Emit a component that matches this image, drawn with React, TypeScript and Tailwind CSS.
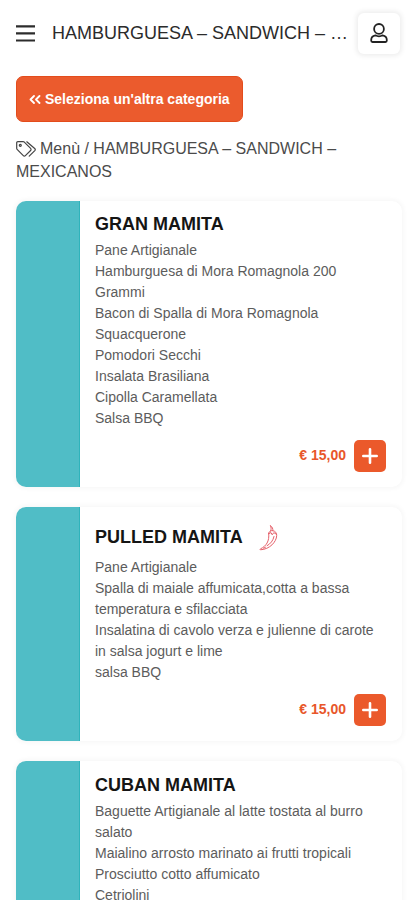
import React from 'react';

type Item = { name: string; lines: string[]; spicy?: boolean; className: string };

const items: Item[] = [
  {
    name: 'GRAN MAMITA',
    className: 'h-[286px] pt-[13px]',
    lines: [
      'Pane Artigianale',
      'Hamburguesa di Mora Romagnola 200',
      'Grammi',
      'Bacon di Spalla di Mora Romagnola',
      'Squacquerone',
      'Pomodori Secchi',
      'Insalata Brasiliana',
      'Cipolla Caramellata',
      'Salsa BBQ',
    ],
  },
  {
    name: 'PULLED MAMITA',
    className: 'h-[234px] pt-[13px]',
    spicy: true,
    lines: [
      'Pane Artigianale',
      'Spalla di maiale affumicata,cotta a bassa',
      'temperatura e sfilacciata',
      'Insalatina di cavolo verza e julienne di carote',
      'in salsa jogurt e lime',
      'salsa BBQ',
    ],
  },
  {
    name: 'CUBAN MAMITA',
    className: 'h-[160px] pt-[14px]',
    lines: [
      'Baguette Artigianale al latte tostata al burro',
      'salato',
      'Maialino arrosto marinato ai frutti tropicali',
      'Prosciutto cotto affumicato',
      'Cetriolini',
    ],
  },
];

function MenuIcon() {
  return (
    <svg className="h-[18px] w-[19px] shrink-0" viewBox="0 0 19 18" stroke="#2c2c2c" strokeWidth="2.2">
      <path d="M0 2.400h19M0 9.400h19M0 16.500h19" />
    </svg>
  );
}

function UserIcon() {
  return (
    <svg className="h-5 w-[18px]" viewBox="0 0 18 20" fill="none" stroke="#222" strokeWidth="1.800" strokeLinejoin="round">
      <circle cx="9" cy="5.900" r="4.900" />
      <path d="M5.400 12.300C2.800 12.800 1.200 14.600 1.200 16.900v.7c0 .9.500 1.400 1.300 1.400h13c.8 0 1.300-.5 1.300-1.400v-.7c0-2.300-1.600-4.100-4.200-4.600-1.100.7-2.300 1-3.600 1s-2.500-.3-3.600-1z" />
    </svg>
  );
}

function TagsIcon() {
  return (
    <svg className="mr-[4px] inline-block h-4 w-5 align-[-3px]" viewBox="0 0 20 16" fill="none" stroke="#444" strokeWidth="1.2" strokeLinejoin="round" strokeLinecap="round">
      <path d="M.7 1.800C.7 1.200 1.200.7 1.800.7h5.400c.4 0 .8.200 1.100.4l6.300 6.300c.6.600.6 1.500 0 2.100l-5.200 5.200c-.6.600-1.500.6-2.100 0L1.100 8.400C.8 8.100.7 7.700.7 7.300z" />
      <path d="M10.800.8l7.900 6.700c.7.600.7 1.400.1 2.100l-5.600 5.500" />
      <circle cx="4.300" cy="4.300" r="1" />
    </svg>
  );
}

function ChiliIcon() {
  return (
    <svg className="ml-[16px] h-[26px] w-5" viewBox="0 0 20 26" fill="none" stroke="#e4606a" strokeWidth="1" strokeLinecap="round" strokeLinejoin="round">
      <path d="M11.500.8c2 1.200 2.600 3 2.300 4.900M11.500.8c.9 1.700.8 3.200.2 5.100" />
      <path d="M9.700 8.300c.4-1.900 2.100-3 4.100-2.600 2.500.4 4.100 2.200 3.900 4.900-.3 6.300-6.900 13.700-16.300 14.200-.6-.4-.3-.8.200-1 5.600-2.800 9-7.400 8.100-15.500z" />
      <path d="M9.900 8.600l2.100-1 1.200 2.200 1.600-2.200 2.500 1.600M15 11.500c-.9 4.200-3.500 7.300-6.900 9.200M4.500 23.200l2-1" />
    </svg>
  );
}

function ProductCard({ item }: { item: Item }) {
  return (
    <article className="flex shrink-0 overflow-hidden rounded-[10px] bg-white shadow-[0_0_4px_2px_rgba(0,0,0,0.03)]">
      <div className="w-16 shrink-0 border-r border-[#2fb3bb] bg-[#50bdc6]" />
      <div className={`flex min-w-0 flex-1 flex-col pl-[15px] pr-4 pb-[15px] ${item.className}`}>
        <div className={item.spicy ? 'mb-px flex h-[36px] items-center' : 'flex h-[26px] items-start'}>
          <h2 className="text-[18px] leading-[21px] font-bold whitespace-nowrap text-[#151515]">{item.name}</h2>
          {item.spicy && <ChiliIcon />}
        </div>
        <div className="text-[14px] leading-[21.1px] whitespace-nowrap text-[#5c5c5c]">
          {item.lines.map((line) => (
            <p key={line}>{line}</p>
          ))}
        </div>
        {item.name !== 'CUBAN MAMITA' && (
          <div className="mt-auto flex items-center justify-end gap-2">
            <span className="text-[14px] font-bold text-[#e8562a]">€ 15,00</span>
            <button className="flex h-8 w-8 items-center justify-center rounded-[5px] bg-[#eb592b]" aria-label="+">
              <svg className="h-4 w-4" viewBox="0 0 16 16" stroke="white" strokeWidth="2.600" strokeLinecap="round">
                <path d="M8 1.300v13.400M1.300 8h13.400" />
              </svg>
            </button>
          </div>
        )}
      </div>
    </article>
  );
}

export default function App() {
  return (
    <main className="h-[900px] w-full overflow-hidden bg-white pl-4 font-['Liberation_Sans',Arial,sans-serif]">
      <header className="flex h-[66px] items-center">
        <MenuIcon />
        <h1 className="ml-[17px] w-[306px] shrink-0 text-[18px] whitespace-nowrap text-[#2b2b2b]">HAMBURGUESA – SANDWICH – …</h1>
        <button className="flex h-[41px] w-[42px] shrink-0 items-center justify-center rounded-[6px] bg-white shadow-[0_0_5px_2px_rgba(0,0,0,0.07)]" aria-label="user">
          <UserIcon />
        </button>
      </header>
      <button className="mt-[10px] flex h-[46px] w-[227px] items-center rounded-[7px] border border-[#e34c1c] bg-[#eb5b2d] pl-3 text-[14px] font-bold whitespace-nowrap text-white">
        <svg className="mr-1 h-[9px] w-[12px]" viewBox="0 0 12 9" fill="none" stroke="white" strokeWidth="1.800" strokeLinecap="round" strokeLinejoin="round">
          <path d="M5 1L1.500 4.500 5 8M10.500 1L7 4.500l3.500 3.500" />
        </svg>
        <span>Seleziona un'altra categoria</span>
      </button>
      <nav className="mt-[15px] h-[46px] text-[16px] leading-[23px] whitespace-nowrap text-[#4b4b4b]">
        <TagsIcon />
        Menù / HAMBURGUESA – SANDWICH –<br />MEXICANOS
      </nav>
      <section className="mt-[17.500px] flex w-[386px] flex-col gap-[20.400px]">
        {items.map((item) => (
          <ProductCard key={item.name} item={item} />
        ))}
      </section>
    </main>
  );
}
